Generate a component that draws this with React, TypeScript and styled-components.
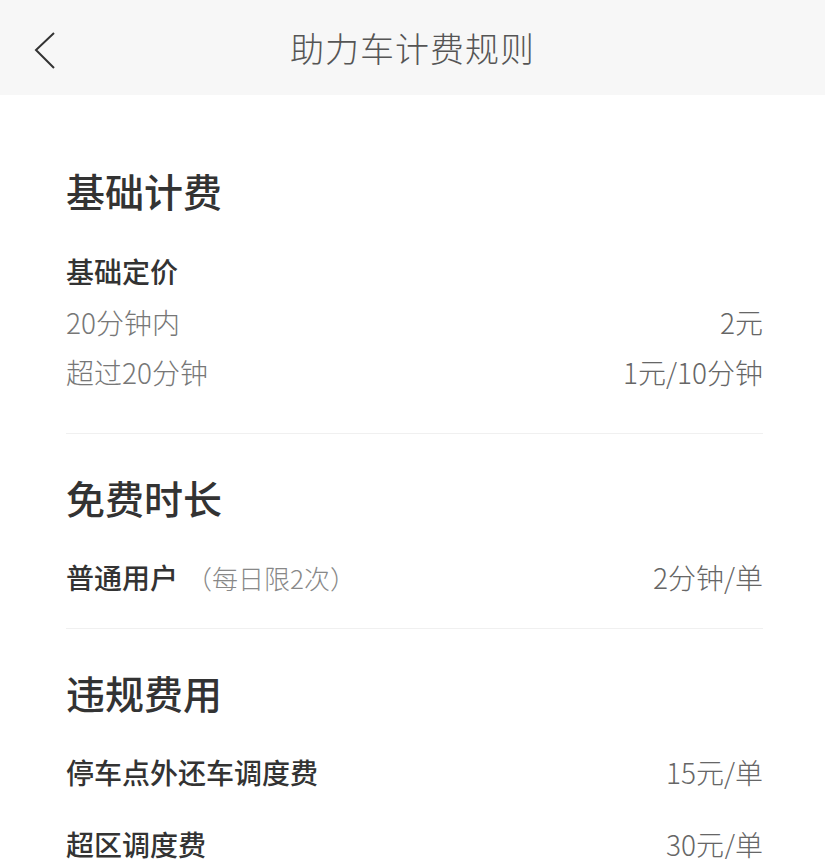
import React from "react";
import styled, { createGlobalStyle } from "styled-components";

type SectionProps = {
    top?: number,
    bottom?: number,
    last?: boolean
}
type RowProps = {
    gap?: number
}
type TextProps = {
    strong?: boolean
}

const GlobalStyle = createGlobalStyle`
    body{
        margin: 0;
        background-color: #ffffff;
        font-family: "Noto Sans CJK SC", "Noto Sans", sans-serif;
    }
`;

const Page = styled.div`
    width: 825px;
    min-height: 859px;
    background-color: #ffffff;
    overflow: hidden;
`;

const Header = styled.header`
    position: relative;
    display: flex;
    justify-content: center;
    align-items: center;
    height: 95px;
    background-color: #f7f7f7;
    & h1{
        margin: 0;
        font-size: 34px;
        font-weight: 300;
        color: #555555;
        letter-spacing: 1px;
    }
`;

const BackButton = styled.button`
    position: absolute;
    left: 28px;
    top: 26px;
    width: 36px;
    height: 48px;
    padding: 0;
    border: none;
    background: transparent;
    cursor: pointer;
`;

const Main = styled.main`
    display: flex;
    flex-direction: column;
    padding: 0 62px 0 66px;
`;

const Section = styled.section<SectionProps>`
    display: flex;
    flex-direction: column;
    padding-top: ${props => props.top ? props.top : 35}px;
    padding-bottom: ${props => props.bottom ? props.bottom : 26}px;
    border-bottom: ${props => props.last ? "none" : "1.5px solid #f0f0f0"};
    & h2{
        margin: 0 0 27px 0;
        font-size: 39px;
        line-height: 56px;
        font-weight: 500;
        color: #333333;
    }
`;

const SubTitle = styled.h3`
    margin: 0;
    font-size: 28px;
    line-height: 52px;
    font-weight: 500;
    color: #333333;
`;

const Row = styled.div<RowProps>`
    display: flex;
    justify-content: space-between;
    align-items: center;
    height: 50px;
    margin-bottom: ${props => props.gap ? props.gap : 0}px;
`;

const Label = styled.span<TextProps>`
    font-size: 28px;
    font-weight: ${props => props.strong ? 500 : 300};
    color: ${props => props.strong ? "#333333" : "#777777"};
    & small{
        font-size: 26px;
        font-weight: 300;
        color: #888888;
        margin-left: 8px;
    }
`;

const Value = styled.span`
    font-size: 28px;
    font-weight: 300;
    color: #666666;
`;

export default function App() {
    return (
        <Page>
            <GlobalStyle />
            <Header>
                <BackButton aria-label="返回">
                    <svg width="36" height="48" viewBox="0 0 36 48">
                        <polyline points="26,7 8,24 26,42" fill="none" stroke="#333" strokeWidth="2" />
                    </svg>
                </BackButton>
                <h1>助力车计费规则</h1>
            </Header>
            <Main>
                <Section top={67} bottom={36}>
                    <h2>基础计费</h2>
                    <SubTitle>基础定价</SubTitle>
                    <Row>
                        <Label>20分钟内</Label>
                        <Value>2元</Value>
                    </Row>
                    <Row>
                        <Label>超过20分钟</Label>
                        <Value>1元/10分钟</Value>
                    </Row>
                </Section>
                <Section>
                    <h2>免费时长</h2>
                    <Row>
                        <Label strong>普通用户<small>（每日限2次）</small></Label>
                        <Value>2分钟/单</Value>
                    </Row>
                </Section>
                <Section last>
                    <h2>违规费用</h2>
                    <Row gap={22}>
                        <Label strong>停车点外还车调度费</Label>
                        <Value>15元/单</Value>
                    </Row>
                    <Row>
                        <Label strong>超区调度费</Label>
                        <Value>30元/单</Value>
                    </Row>
                </Section>
            </Main>
        </Page>
    );
}
